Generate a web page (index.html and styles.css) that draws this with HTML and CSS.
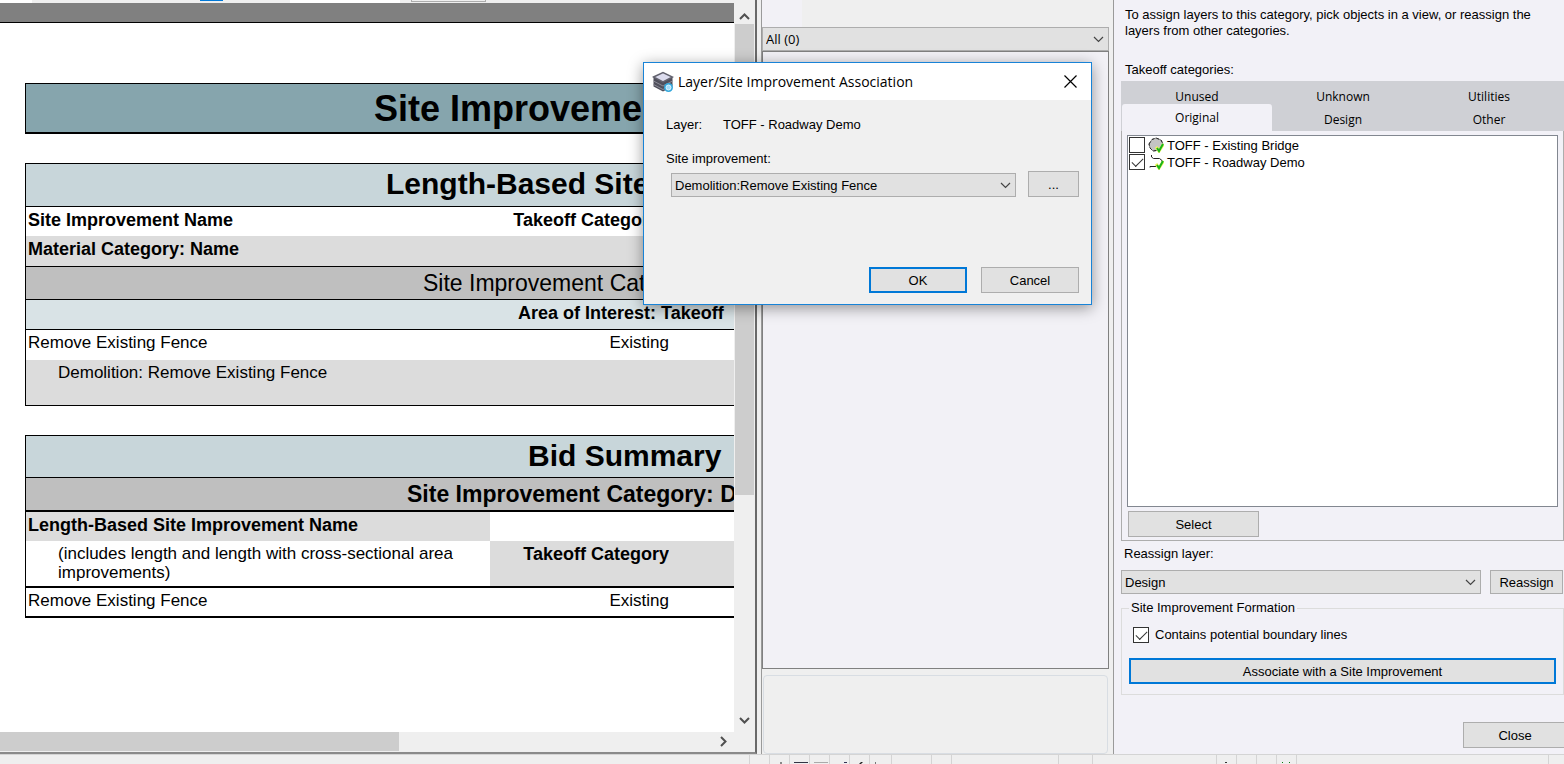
FILE: index.html
```
<!DOCTYPE html>
<html lang="en">
  <head>
    <meta charset="UTF-8">
    <title>Takeoff - Site Improvement</title>
    <link rel="stylesheet" href="styles.css">
  </head>
  <body>
    <main class="workspace">
      <section class="report">
        <div class="toolbar">
          <span class="tool-field"></span>
          <span class="tool-active"></span>
          <span class="tool-search"></span>
          <span class="tool-button"></span>
        </div>
        <div class="view">
          <div class="page">
            <div class="page-edge"></div>
            <h1 class="report-title">Site Improvement</h1>

            <table class="report-table">
              <colgroup><col class="col-name"><col class="col-category"><col></colgroup>
              <tr class="row-heading"><th colspan="3" class="indent-length">Length-Based Site</th></tr>
              <tr class="row-names"><th>Site Improvement Name</th><th class="right short">Takeoff Category</th><th></th></tr>
              <tr class="row-material"><th colspan="3">Material Category: Name</th></tr>
              <tr class="row-category plain"><th colspan="3" class="indent-category">Site Improvement Category</th></tr>
              <tr class="row-area"><th colspan="3" class="indent-area">Area of Interest: Takeoff</th></tr>
              <tr class="row-item"><td>Remove Existing Fence</td><td class="right">Existing</td><td></td></tr>
              <tr class="row-detail"><td colspan="3" class="indent">Demolition: Remove Existing Fence</td></tr>
            </table>

            <table class="report-table bid">
              <colgroup><col class="col-name"><col class="col-category"><col></colgroup>
              <tr class="row-heading"><th colspan="3" class="indent-bid">Bid Summary</th></tr>
              <tr class="row-category"><th colspan="3" class="indent-bid-category">Site Improvement Category: Demolition</th></tr>
              <tr class="row-bid-name"><th class="shade">Length-Based Site Improvement Name</th><th></th><th></th></tr>
              <tr class="row-includes"><td class="indent">(includes length and length with cross-sectional area improvements)</td><th class="right shade">Takeoff Category</th><th class="shade"></th></tr>
              <tr class="row-total"><td>Remove Existing Fence</td><td class="right">Existing</td><td></td></tr>
            </table>
          </div>
          <div class="scroll-v">
            <svg width="19" height="21" viewBox="0 0 19 21"><path d="M5 16l4.500-4.500L14 16" fill="none" stroke="#505050" stroke-width="2"/></svg>
            <div class="thumb-v"></div>
            <svg class="scroll-down" width="19" height="21" viewBox="0 0 19 21"><path d="M5 7l4.500 4.500L14 7" fill="none" stroke="#505050" stroke-width="2"/></svg>
          </div>
        </div>
        <div class="scroll-h">
          <div class="thumb-h"></div>
          <svg class="scroll-right" width="20" height="19" viewBox="0 0 20 19"><path d="M8 5l4.500 4.500L8 14" fill="none" stroke="#505050" stroke-width="2"/></svg>
        </div>
      </section>

      <section class="selection">
        <div class="selection-top"><span></span></div>
        <div class="combo combo-all">
          <select aria-label="Selection filter"><option>All (0)</option></select>
          <svg width="11" height="7" viewBox="0 0 11 7"><path d="M1 1l4.500 4.500L10 1" fill="none" stroke="#444" stroke-width="1.200"/></svg>
        </div>
        <div class="selection-list"></div>
        <div class="selection-note"></div>
      </section>

      <section class="takeoff">
        <p class="help">To assign layers to this category, pick objects in a view, or reassign the layers from other categories.</p>
        <p class="categories-label">Takeoff categories:</p>
        <div class="tabs" role="tablist">
          <button role="tab">Unused</button>
          <button role="tab">Unknown</button>
          <button role="tab">Utilities</button>
          <button role="tab" class="active" aria-selected="true">Original</button>
          <button role="tab">Design</button>
          <button role="tab">Other</button>
        </div>
        <div class="tab-panel">
          <ul class="layers">
            <li>
              <label>
                <input type="checkbox">
                <svg width="16" height="16" viewBox="0 0 16 16">
                  <path d="M1 7L4 2.500L8 1L13 3L15 7L12 13L5 14L2 11Z" fill="#c4c4c4" stroke="#888"/>
                  <path d="M1 7L4 2.500L8 1L13 3L15 7L12 13L5 14L2 11Z" fill="none" stroke="#222" stroke-dasharray="3 2"/>
                  <path d="M8 10l3 4l4.500-7" fill="none" stroke="#eef35a" stroke-width="3"/>
                  <path d="M9 11l2 3l4-7" fill="none" stroke="#18b51c" stroke-width="2"/>
                </svg>
                TOFF - Existing Bridge
              </label>
            </li>
            <li>
              <label>
                <input type="checkbox" checked>
                <svg width="16" height="16" viewBox="0 0 16 16">
                  <path d="M3.500 1v2l2 1.500h6l2.500 2v2M2 13.500v-1h6" fill="none" stroke="#222"/>
                  <path d="M8 10l3 4l4.500-7" fill="none" stroke="#eef35a" stroke-width="3"/>
                  <path d="M9 11l2 3l4-7" fill="none" stroke="#18b51c" stroke-width="2"/>
                </svg>
                TOFF - Roadway Demo
              </label>
            </li>
          </ul>
          <button class="btn btn-select">Select</button>
        </div>
        <label class="reassign-label" for="reassign">Reassign layer:</label>
        <div class="reassign">
          <div class="combo">
            <select id="reassign"><option>Design</option></select>
            <svg width="11" height="7" viewBox="0 0 11 7"><path d="M1 1l4.500 4.500L10 1" fill="none" stroke="#444" stroke-width="1.200"/></svg>
          </div>
          <button class="btn">Reassign</button>
        </div>
        <fieldset class="formation">
          <legend>Site Improvement Formation</legend>
          <label class="boundary"><input type="checkbox" checked>Contains potential boundary lines</label>
          <button class="btn btn-default">Associate with a Site Improvement</button>
        </fieldset>
        <button class="btn btn-close">Close</button>
      </section>
    </main>

    <footer class="statusbar">
      <span class="grow"></span>
      <span class="w20"></span>
      <span class="w20"><svg width="19" height="2"><path d="M10 0h2v2h-2z" fill="#888"/></svg></span>
      <span class="w20"><svg width="19" height="2"><path d="M4 0h14v1H4z" fill="#334"/></svg></span>
      <span class="w20"><svg width="19" height="2"><path d="M4 0h14v1H4z" fill="#aaa"/></svg></span>
      <span class="w20"><svg width="19" height="2"><path d="M14 0h3v1h-3z" fill="#335"/></svg></span>
      <span class="w20"><svg width="19" height="2"><path d="M11 0h2l-2 2h-2z" fill="#222"/></svg></span>
      <span class="w22"><svg width="19" height="2"><path d="M5 0h1v2H5z" fill="#777"/></svg></span>
      <span class="w40"></span>
      <span class="w20"></span>
      <span class="w107"></span>
      <span class="w34"></span>
      <span class="w124"></span>
      <span class="w20"><svg width="19" height="2"><path d="M8 0h2v1H8z" fill="#333"/></svg></span>
      <span class="w20"></span>
      <span class="w20"></span>
      <span class="w20"><svg width="19" height="2"><path d="M5 0h1v1H5zM12 0h1v1h-1z" fill="#0a7a0a"/></svg></span>
      <span class="w252"></span>
      <span class="w16"></span>
    </footer>

    <div class="dialog" role="dialog" aria-labelledby="dialog-title">
      <div class="dialog-bar">
        <svg width="22" height="22" viewBox="0 0 22 22">
          <path d="M1.500 6v9.500L11 20.500l9.500-5V6z" fill="#50505c"/>
          <path d="M1.500 6L11 1.500L20.500 6L11 11z" fill="#dcdcee" stroke="#62626e" stroke-width="1.500"/>
          <path d="M1.500 10L11 15l9.500-5M1.500 13.500L11 18.500l9.500-5" fill="none" stroke="#8c8c98"/>
          <circle cx="16.500" cy="16.500" r="4.500" fill="#35a8dc"/>
          <circle cx="16.500" cy="16.500" r="2.500" fill="#a5dcf8" stroke="#dff4ff"/>
        </svg>
        <h2 id="dialog-title">Layer/Site Improvement Association</h2>
        <button class="dialog-close" aria-label="Close dialog">
          <svg width="13" height="13" viewBox="0 0 13 13"><path d="M.5.5l12 12M12.500.5l-12 12" stroke="#000" stroke-width="1.200"/></svg>
        </button>
      </div>
      <div class="dialog-body">
        <p class="layer-line"><span>Layer:</span><span>TOFF - Roadway Demo</span></p>
        <label for="improvement">Site improvement:</label>
        <div class="improvement">
          <div class="combo">
            <select id="improvement"><option>Demolition:Remove Existing Fence</option></select>
            <svg width="11" height="7" viewBox="0 0 11 7"><path d="M1 1l4.500 4.500L10 1" fill="none" stroke="#444" stroke-width="1.200"/></svg>
          </div>
          <button class="btn">...</button>
        </div>
        <div class="dialog-actions">
          <button class="btn btn-default">OK</button>
          <button class="btn">Cancel</button>
        </div>
      </div>
    </div>
  </body>
</html>
```

FILE: styles.css
```
* {
  box-sizing: border-box;
}

body {
  margin: 0;
  height: 100vh;
  display: flex;
  flex-direction: column;
  overflow: hidden;
  background-color: #efefef;
  color: #000;
  font-family: "Liberation Sans", Arial, sans-serif;
  font-size: 13px;
  line-height: 16px;
}

h1, h2, p, ul {
  margin: 0;
  padding: 0;
}

button, select, input {
  margin: 0;
  font: inherit;
  color: inherit;
}

svg {
  display: block;
  flex: none;
}

.workspace {
  flex: 1;
  min-height: 0;
  display: grid;
  grid-template-columns: minmax(0, 1fr) 348px 451px;
  column-gap: 4px;
}

/* shared controls */
.btn {
  height: 26px;
  padding: 1px 0 0;
  border: 1px solid #adadad;
  border-radius: 0;
  background-color: #e1e1e1;
}

.btn-default {
  border: 2px solid #0078d7;
}

.combo {
  position: relative;
  flex: 1;
}

.combo select {
  display: block;
  width: 100%;
  height: 24px;
  padding: 1px 20px 0 3px;
  border: 1px solid #adadad;
  border-radius: 0;
  background-color: #e1e1e1;
  appearance: none;
}

.combo svg {
  position: absolute;
  top: 9px;
  right: 5px;
  pointer-events: none;
}

input[type="checkbox"] {
  position: relative;
  flex: none;
  width: 16px;
  height: 16px;
  border: 1px solid #333;
  background-color: #fff;
  appearance: none;
}

input[type="checkbox"]:checked::after {
  content: "";
  position: absolute;
  top: 3px;
  left: 2px;
  width: 10px;
  height: 5px;
  border-left: 1px solid #333;
  border-bottom: 1px solid #333;
  transform: rotate(-45deg);
}

/* report view */
.report {
  min-width: 0;
  min-height: 0;
  display: flex;
  flex-direction: column;
  border-right: 2px solid #696969;
  border-bottom: 2px solid #8a8a8a;
}

.toolbar {
  height: 3px;
  display: flex;
  overflow: hidden;
}

.tool-field {
  width: 32px;
  background-color: #fff;
}

.tool-active {
  width: 23px;
  height: 1px;
  margin-left: 168px;
  background-color: #0078d7;
}

.tool-search {
  width: 110px;
  margin-left: 67px;
  background-color: #fff;
}

.tool-button {
  width: 75px;
  height: 2px;
  margin-left: 11px;
  border: 1px solid #adadad;
  border-top: 0;
}

.view {
  flex: 1;
  min-height: 0;
  display: flex;
}

.page {
  flex: 1;
  min-width: 0;
  overflow: hidden;
  background-color: #fff;
}

.page-edge {
  height: 20px;
  margin-bottom: 60px;
  background-color: #808080;
  border-bottom: 1px solid #000;
}

.report-title {
  height: 51px;
  margin-left: 25px;
  padding-left: 348px;
  overflow: hidden;
  border: 1px solid #000;
  border-right: 0;
  border-bottom-width: 2px;
  background-color: #86a5ad;
  font-size: 36px;
  line-height: 50px;
  white-space: nowrap;
}

.report-table {
  width: calc(100% - 25px);
  margin: 29px 0 0 25px;
  border-collapse: separate;
  border-spacing: 0;
  border: 1px solid #000;
  border-right: 0;
  table-layout: fixed;
  font-size: 17px;
  line-height: 19px;
}

.col-name {
  width: 464px;
}

.col-category {
  width: 179px;
}

.report-table th,
.report-table td {
  padding: 3px 2px;
  overflow: hidden;
  text-align: left;
  vertical-align: top;
  white-space: nowrap;
}

.report-table th {
  font-size: 18px;
  line-height: 20px;
}

.report-table .right {
  padding-right: 0;
  text-align: right;
}

.report-table .short {
  padding-right: 10px;
}

.report-table .indent {
  padding-left: 32px;
  white-space: normal;
}

.report-table .shade {
  background-color: #dcdcdc;
}

.report-table .row-heading th {
  height: 43px;
  border-bottom: 1px solid #000;
  background-color: #c8d6da;
  font-size: 30px;
  line-height: 34px;
}

.row-names th {
  height: 29px;
}

.row-material th {
  height: 31px;
  border-bottom: 1px solid #000;
  background-color: #dcdcdc;
}

.report-table .row-category th {
  height: 33px;
  border-bottom: 1px solid #000;
  background-color: #bfbfbf;
  font-size: 23px;
  line-height: 26px;
}

.report-table .plain th {
  font-weight: normal;
}

.row-area th {
  height: 30px;
  border-bottom: 1px solid #000;
  background-color: #d9e3e6;
}

.row-item td {
  height: 30px;
}

.row-detail td {
  height: 45px;
  background-color: #dcdcdc;
}

.report-table .indent-length {
  padding-left: 360px;
}

.report-table .indent-category {
  padding-left: 397px;
}

.report-table .indent-area {
  padding-left: 492px;
}

.report-table .indent-bid {
  padding-left: 502px;
}

.report-table .indent-bid-category {
  padding-left: 381px;
}

.bid {
  border-bottom-width: 2px;
}

.bid .row-heading th {
  height: 42px;
}

.report-table.bid .row-category th {
  height: 34px;
  border-bottom-width: 2px;
}

.row-bid-name th {
  height: 29px;
}

.row-includes td,
.row-includes th {
  height: 47px;
  border-bottom: 2px solid #000;
}

.row-total td {
  height: 28px;
}

.scroll-v {
  width: 21px;
  display: flex;
  flex-direction: column;
  padding-left: 1px;
}

.thumb-v {
  width: 19px;
  height: 471px;
  background-color: #cdcdcd;
}

.scroll-down {
  margin-top: auto;
}

.scroll-h {
  height: 20px;
  display: flex;
  padding-right: 22px;
}

.thumb-h {
  width: 399px;
  height: 19px;
  background-color: #cdcdcd;
}

.scroll-right {
  margin-left: auto;
}

/* selection explorer */
.selection {
  display: flex;
  flex-direction: column;
  border-left: 1px solid #9a9a9a;
}

.selection-top {
  height: 27px;
  display: flex;
}

.selection-top span {
  width: 40px;
  background-color: #f2f1f6;
}

.combo-all {
  flex: none;
  font-family: "Open Sans", "Noto Sans", sans-serif;
}

.combo-all select {
  padding-top: 0;
}

.selection-list {
  flex: 1;
  border: 1px solid #808080;
  background-color: #f2f1f6;
}

.selection-note {
  height: 79px;
  margin: 6px 1px 0;
  border: 1px solid #d8dde3;
  border-radius: 4px;
}

/* takeoff categories */
.takeoff {
  min-width: 0;
  display: flex;
  flex-direction: column;
  padding: 7px 0 6px 7px;
  border-left: 1px solid #9a9a9a;
  background-color: #f2f1f7;
}

.help {
  padding: 0 16px 0 4px;
}

.categories-label {
  padding: 23px 0 3px 4px;
}

.tabs {
  display: grid;
  grid-template-columns: repeat(3, 1fr);
  padding: 4px 2px 0 3px;
  background-color: #cfd0d5;
  font-family: "Open Sans", "Noto Sans", sans-serif;
  font-size: 12px;
}

.tabs button {
  height: 23px;
  padding: 0;
  border: 0;
  background: none;
}

.tabs .active {
  height: 27px;
  margin: -4px -2px 0;
  border-radius: 3px 3px 0 0;
  background-color: #f2f1f7;
}

.tab-panel {
  flex: 1;
  min-height: 0;
  display: flex;
  flex-direction: column;
  padding: 4px 5px 3px;
  border: 1px solid #adadad;
  border-top: 0;
}

.layers {
  flex: 1;
  padding: 1px;
  border: 1px solid #828790;
  background-color: #fff;
  list-style: none;
}

.layers li {
  height: 17px;
}

.layers label {
  display: flex;
  gap: 3px;
  line-height: 18px;
}

.btn-select {
  width: 131px;
  margin: 4px 0 0 1px;
}

.reassign-label {
  padding: 5px 0 8px 3px;
}

.reassign {
  display: flex;
  gap: 9px;
  padding-right: 1px;
}

.reassign .btn {
  width: 73px;
  height: 24px;
}

.formation {
  margin: 6px 0 27px;
  padding: 11px 7px 10px;
  border: 1px solid #dcdcdc;
}

.formation legend {
  margin-left: 0;
  padding: 0 2px;
}

.boundary {
  display: flex;
  gap: 6px;
  margin-left: 4px;
}

.formation .btn {
  width: 100%;
  margin-top: 15px;
}

.btn-close {
  width: 104px;
  margin-right: -3px;
  align-self: flex-end;
}

/* status bar */
.statusbar {
  height: 10px;
  display: flex;
  border-top: 1px solid #d4d4d4;
}

.statusbar span {
  display: flex;
  align-items: flex-end;
  border-left: 1px solid #d4d4d4;
}

.statusbar .grow {
  flex: 1;
  border-left: 0;
}

.w16 { width: 16px; }
.w20 { width: 20px; }
.w22 { width: 22px; }
.w34 { width: 34px; }
.w40 { width: 40px; }
.w107 { width: 107px; }
.w124 { width: 124px; }
.w252 { width: 252px; }

/* association dialog */
.dialog {
  position: absolute;
  top: 62px;
  left: 643px;
  width: 449px;
  border: 1px solid #1883d7;
  background-color: #f0f0f0;
  box-shadow: 0 3px 14px rgba(0, 0, 0, 0.4);
}

.dialog-bar {
  height: 37px;
  display: flex;
  align-items: center;
  gap: 4px;
  padding: 0 14px 0 8px;
  background-color: #fff;
}

.dialog-bar h2 {
  flex: 1;
  font-family: "Open Sans", "Noto Sans", sans-serif;
  font-size: 14px;
  font-weight: normal;
}

.dialog-close {
  padding: 0;
  border: 0;
  background: none;
}

.dialog-body {
  padding: 17px 12px 11px 22px;
}

.layer-line {
  display: flex;
  margin-bottom: 18px;
}

.layer-line span:first-child {
  width: 57px;
}

.improvement {
  display: flex;
  align-items: flex-end;
  gap: 12px;
  margin: 4px 0 0 5px;
}

.improvement .btn {
  width: 51px;
}

.dialog-actions {
  display: flex;
  justify-content: flex-end;
  gap: 14px;
  margin-top: 70px;
}

.dialog-actions .btn {
  width: 98px;
}
```
